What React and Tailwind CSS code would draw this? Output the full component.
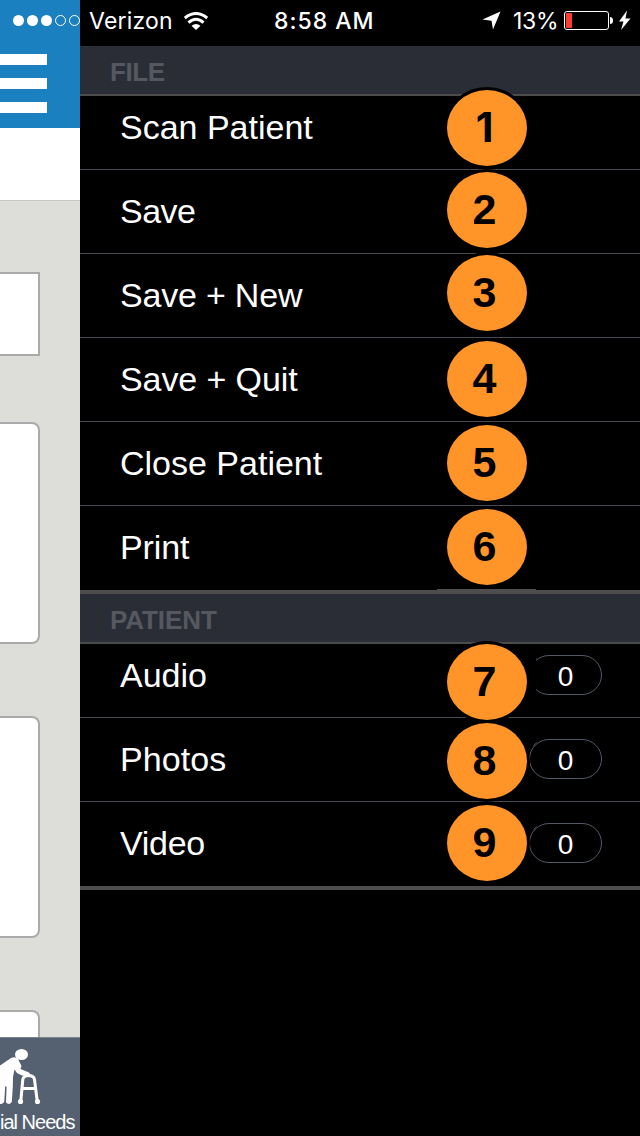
import React from "react";

const fileItems = [
  { label: "Scan Patient", n: 1, row: "h-[74px]", spot: "-top-[6px]", text: "tracking-[0px]" },
  { label: "Save", n: 2, row: "h-[84px]", spot: "top-[2px]", text: "tracking-[-0.5px]" },
  { label: "Save + New", n: 3, row: "h-[84px]", spot: "top-[1px]", text: "tracking-[-0.2px]" },
  { label: "Save + Quit", n: 4, row: "h-[84px]", spot: "top-[3px]", text: "tracking-[-0.1px]" },
  { label: "Close Patient", n: 5, row: "h-[84px]", spot: "top-[3px]", text: "tracking-[0px]" },
  { label: "Print", n: 6, row: "h-[84px]", spot: "top-[3px]", text: "tracking-[-0.1px]" },
];

const patientItems = [
  { label: "Audio", n: 7, row: "h-[74px]", spot: "top-0", text: "tracking-[0px]", count: 0, pill: "[clip-path:inset(0_0_0_7px)]" },
  { label: "Photos", n: 8, row: "h-[84px]", spot: "top-[5px]", text: "tracking-[0.1px]", count: 0, pill: "" },
  { label: "Video", n: 9, row: "h-[84px]", spot: "top-[3px]", text: "tracking-[-0.3px]", count: 0, pill: "" },
];

function MenuRow({ item, last }) {
  return (
    <div className={`relative flex items-end ${item.row} ${last ? "" : "border-b border-[#474b53]"}`}>
      <div className={`flex h-[84px] w-full shrink-0 items-center justify-between pr-[38px] pb-[2px] pl-10 ${last ? "" : "-mb-px"}`}>
        <span className={`text-[34px] leading-10 whitespace-nowrap text-white ${item.text}`}>{item.label}</span>
        {item.count !== undefined && (
          <span className={`relative flex h-10 w-[73px] items-center justify-center rounded-full border border-[#535967] pt-[3px] text-[28px] leading-8 text-white ${item.pill}`}>
            {item.count}
            <svg className="absolute top-px left-[3px] h-[6px] w-[6px]" viewBox="0 0 6 6" stroke="#4c505c">
              <path d="M0.500 5 L3.500 1.500" />
            </svg>
          </span>
        )}
      </div>
      <span className={`absolute left-[367px] flex h-[76px] w-20 items-center justify-center rounded-[50%] bg-[#ff9428] pr-[5px] pb-[2px] leading-none font-bold text-black shadow-[0_0_0_3px_#000] ${item.n === 1 ? "font-['Inter',sans-serif] text-[41px]" : "text-[43px]"} ${item.spot}`}>
        {item.n}
      </span>
      {item.n === 6 && <i className="absolute bottom-0 left-[357px] h-px w-[99px] bg-[#504c51]" />}
    </div>
  );
}

function Section({ title, items, tracking }) {
  return (
    <section className="border-b-4 border-[#4d4d4d]">
      <h2 className={`flex h-[50px] items-center border-b-2 border-[#4b4b4b] bg-[#2a2d36] pt-1 pl-[30px] text-[26px] leading-8 font-bold text-[#555861] ${tracking}`}>
        {title}
      </h2>
      {items.map((item, i) => (
        <MenuRow key={item.n} item={item} last={i === items.length - 1} />
      ))}
    </section>
  );
}

function Walker() {
  return (
    <svg className="block h-[70px] w-20" viewBox="0 1038 80 70" fill="#fff">
      <ellipse cx="21.500" cy="1054.500" rx="6.500" ry="5.500" />
      <path d="M0 1065.500 L11 1058 Q15 1056 18 1059 L21.500 1066 L20.500 1069 L29 1072.500 Q31 1074 30 1076 L22 1075.500 L17 1073 L14.500 1069.500 L13 1077 L12.800 1087 L11.800 1102 Q9 1105.500 6 1102.500 L6.600 1087 L5.200 1086 L4.200 1102 Q2.500 1104.500 0 1104 Z" />
      <path d="M20.800 1101 L22.800 1079.500 Q23.500 1075.800 28.500 1075.600 Q33.700 1075.600 34.500 1079.500 L37.200 1101 M22 1088.500 H36" fill="none" stroke="#fff" strokeWidth="3" />
      <circle cx="20.500" cy="1101.500" r="2.600" />
      <circle cx="37.500" cy="1101.500" r="2.600" />
    </svg>
  );
}

function AppEdge() {
  return (
    <div className="flex h-full w-20 shrink-0 flex-col overflow-hidden bg-[#dddeda]">
      <header className="h-32 shrink-0 bg-[#1a80c0]">
        <svg className="block h-10 w-20" viewBox="0 0 80 40">
          <g fill="#fff">
            <circle cx="18.500" cy="20.500" r="5.500" />
            <circle cx="32.500" cy="20.500" r="5.500" />
            <circle cx="46.500" cy="20.500" r="5.500" />
          </g>
          <g fill="none" stroke="#fff">
            <circle cx="60.500" cy="20.500" r="5" />
            <circle cx="74.500" cy="20.500" r="5" />
          </g>
        </svg>
        <div className="mt-[14px] flex w-[47px] flex-col gap-[13px]">
          <i className="h-[11px] bg-white" />
          <i className="h-[11px] bg-white" />
          <i className="h-[11px] bg-white" />
        </div>
      </header>
      <div className="h-[73px] shrink-0 border-b border-[#c5c7c0] bg-white" />
      <div className="flex h-[836px] shrink-0 flex-col overflow-hidden pt-[71px]">
        <div className="h-[84px] w-10 shrink-0 border-2 border-l-0 border-[#aaaaaa] bg-white" />
        <div className="mt-[66px] h-[222px] w-10 shrink-0 rounded-r-lg border-2 border-l-0 border-[#aaaaaa] bg-white" />
        <div className="mt-[72px] h-[222px] w-10 shrink-0 rounded-r-lg border-2 border-l-0 border-[#aaaaaa] bg-white" />
        <div className="mt-[72px] h-[100px] w-10 shrink-0 rounded-r-lg border-2 border-l-0 border-[#aaaaaa] bg-white" />
      </div>
      <footer className="flex flex-1 flex-col items-start border-t border-[#7b838b] bg-[#556170]">
        <Walker />
        <span className="text-[20px] leading-7 tracking-[-1px] whitespace-nowrap text-white">ial Needs</span>
      </footer>
    </div>
  );
}

function StatusBar() {
  return (
    <div className="flex h-[46px] items-center pb-[5px] pl-[9px] font-['Inter',sans-serif] text-[23px] leading-7 text-white">
      <span className="w-[95px] shrink-0 tracking-[0.2px]">Verizon</span>
      <svg className="block h-[18px] w-6 shrink-0" viewBox="0 0 24 18" fill="none" stroke="#fff" strokeWidth="3">
        <path d="M0.800 6 Q12 -3 23.200 6" />
        <path d="M4.500 10.600 Q12 4 19.500 10.600" />
        <path d="M7.500 13.800 Q12 10 16.500 13.800 L12 18 Z" fill="#fff" stroke="none" />
      </svg>
      <span className="ml-[66px] w-[104px] shrink-0 font-medium tracking-[1px] whitespace-nowrap">8:58 AM</span>
      <svg className="ml-[104px] block h-[19px] w-[19px] shrink-0" viewBox="0 0 19 19" fill="#fff">
        <path d="M18.500 0.500 L11 18.500 L9.500 9.800 L0.500 8.500 Z" />
      </svg>
      <span className="ml-3 w-[51px] shrink-0 tracking-[-0.3px] whitespace-nowrap">13%</span>
      <svg className="block h-6 w-[70px] shrink-0" viewBox="564 9 70 24">
        <rect x="564.500" y="11.500" width="44" height="18" rx="2.500" fill="none" stroke="#fff" />
        <rect x="566" y="13" width="6" height="15" rx="1" fill="#ff3b30" />
        <path d="M610 17 Q613 17 613 20.500 Q613 24 610 24 Z" fill="#fff" />
        <path d="M627 10.500 L619 21.500 H623.500 L621 30 L630.500 18.500 H625.500 Z" fill="#fff" />
      </svg>
    </div>
  );
}

export default function App() {
  return (
    <main className="flex h-[1136px] w-[640px] overflow-hidden bg-black font-['Liberation_Sans',Arial,sans-serif]">
      <AppEdge />
      <div className="flex w-[560px] flex-col bg-black">
        <StatusBar />
        <Section title="FILE" items={fileItems} tracking="tracking-[-0.4px]" />
        <Section title="PATIENT" items={patientItems} tracking="tracking-[-0.1px]" />
      </div>
    </main>
  );
}
